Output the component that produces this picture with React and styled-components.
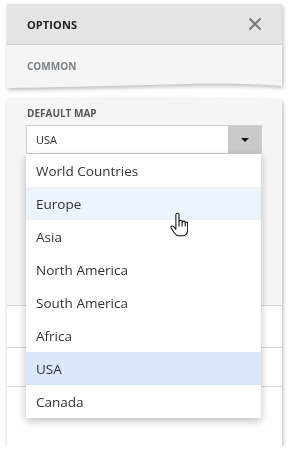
import React from 'react'
import styled, { createGlobalStyle } from 'styled-components'

const GlobalStyle = createGlobalStyle`
  body {
    margin: 0;
    padding: 0;
    background: #ffffff;
    font-family: 'Open Sans', 'Noto Sans', sans-serif;
  }
`
const Page = styled.main`
  padding: 4px 10px 0 7px;
  width: 275px;
`
const Panel = styled.section`
  position: relative;
  filter: drop-shadow(1px 2px 2px rgba(0, 0, 0, 0.28));
  margin-top: ${p => p.$gap || 0}px;
`
const Header = styled.header`
  display: flex;
  align-items: center;
  justify-content: space-between;
  height: 40px;
  padding: 0 20px 0 20px;
  background: #e4e4e4;
  border-bottom: 1px solid #d2d2d2;
`
const Title = styled.h1`
  margin: 0;
  font-size: 11px;
  font-weight: 700;
  color: #222;
  letter-spacing: 0.1px;
`
const Close = styled.button`
  display: flex;
  border: 0;
  padding: 0;
  background: none;
  cursor: pointer;
`
const Tab = styled.div`
  height: 38px;
  padding: 3px 20px 0;
  box-sizing: border-box;
  display: flex;
  align-items: center;
  background: #f5f5f5;
  font-size: 10px;
  font-weight: 700;
  color: #7b7f86;
`
const Wave = styled.svg`
  display: block;
  width: 275px;
  height: ${p => p.$h}px;
`
const Section = styled.div`
  background: #f5f5f5;
  padding: 5px 20px 151px 19px;
`
const Label = styled.div`
  font-size: 10px;
  font-weight: 700;
  line-height: 14px;
  color: #555;
  padding-left: 1px;
`
const SelectBox = styled.div`
  position: relative;
  margin-top: 5px;
  height: 29px;
  box-sizing: border-box;
  border: 1px solid #cfcfcf;
  background: #fff;
  display: flex;
  align-items: center;
  justify-content: space-between;
`
const Value = styled.span`
  font-size: 11px;
  color: #333;
  padding-left: 9px;
`
const ArrowButton = styled.span`
  width: 33px;
  height: 27px;
  background: #c9c9c9;
  display: flex;
  align-items: center;
  justify-content: center;
`
const Caret = styled.span`
  width: 0;
  height: 0;
  border-left: 4px solid transparent;
  border-right: 4px solid transparent;
  border-top: 4px solid #111;
`
const List = styled.ul`
  position: absolute;
  z-index: 2;
  left: -1px;
  top: 28px;
  width: 235px;
  margin: 0;
  padding: 0;
  list-style: none;
  background: #fff;
  box-shadow: 0 3px 8px rgba(0, 0, 0, 0.25);
`
const Item = styled.li`
  height: 33px;
  display: flex;
  align-items: center;
  padding-left: 10px;
  font-size: 13.5px;
  color: #333;
  background: ${p => (p.$selected ? '#dae8f9' : p.$hover ? '#ebf3fd' : '#fff')};
`
const Row = styled.div`
  height: ${p => p.$h}px;
  border-top: 1px solid #d6d6d6;
  background: #fff;
`
const Cursor = styled.svg`
  position: absolute;
  z-index: 3;
  left: 143px;
  top: 87px;
  width: 18px;
  height: 24px;
`

const items = [
  'World Countries',
  'Europe',
  'Asia',
  'North America',
  'South America',
  'Africa',
  'USA',
  'Canada'
]

const App = () => {
  return (
    <>
      <GlobalStyle />
      <Page>
        <Panel>
          <Header>
            <Title>OPTIONS</Title>
            <Close aria-label="Close">
              <svg width="14" height="14" viewBox="0 0 14 14">
                <path d="M1.5 1.5 L12.5 12.5 M12.5 1.5 L1.5 12.5" stroke="#777" strokeWidth="2" />
              </svg>
            </Close>
          </Header>
          <Tab>COMMON</Tab>
          <Wave $h={6} viewBox="0 0 275 6" preserveAspectRatio="none">
            <path d="M0 0 H275 V3 C245 0.5 205 0.5 170 1.2 C120 2.2 60 4.2 0 5 Z" fill="#f5f5f5" />
          </Wave>
        </Panel>
        <Panel $gap={8}>
          <Wave $h={4} viewBox="0 0 275 4" preserveAspectRatio="none">
            <path d="M0 4 V2 C70 0.5 140 0 200 1 C240 1.6 260 2.4 275 3 V4 Z" fill="#f5f5f5" />
          </Wave>
          <Section>
            <Label>DEFAULT MAP</Label>
            <SelectBox>
              <Value>USA</Value>
              <ArrowButton>
                <Caret />
              </ArrowButton>
              <List>
                {items.map(name => (
                  <Item key={name} $hover={name === 'Europe'} $selected={name === 'USA'}>
                    {name}
                  </Item>
                ))}
              </List>
              <Cursor viewBox="0 0 17 23">
                <path
                  d="M5.5 1.6 C5.5 0.7 6.2 0.2 7 0.2 C7.8 0.2 8.5 0.7 8.5 1.6 V8.2 C8.5 7.4 9.2 6.9 10 6.9 C10.8 6.9 11.5 7.4 11.5 8.2 V9 C11.5 8.2 12.2 7.8 13 7.8 C13.8 7.8 14.5 8.3 14.5 9.1 V9.8 C14.5 9.1 15.1 8.7 15.7 8.7 C16.3 8.7 16.8 9.2 16.8 9.9 V15.5 C16.8 19 15 21.8 11.6 21.8 H8.4 C6.5 21.8 5.2 20.8 4.2 19.4 L1 14.4 C0.5 13.6 0.8 12.8 1.5 12.5 C2.2 12.2 2.9 12.5 3.4 13.1 L5.5 15.6 Z"
                  fill="#fff"
                  stroke="#111"
                  strokeWidth="1"
                  strokeLinejoin="round"
                />
                <path d="M8.5 8.2 V13 M11.5 9 V13 M14.5 9.8 V13" stroke="#111" strokeWidth="1" fill="none" />
              </Cursor>
            </SelectBox>
          </Section>
          <Row $h={41} />
          <Row $h={38} />
          <Row $h={59} />
        </Panel>
      </Page>
    </>
  )
}

export default App
